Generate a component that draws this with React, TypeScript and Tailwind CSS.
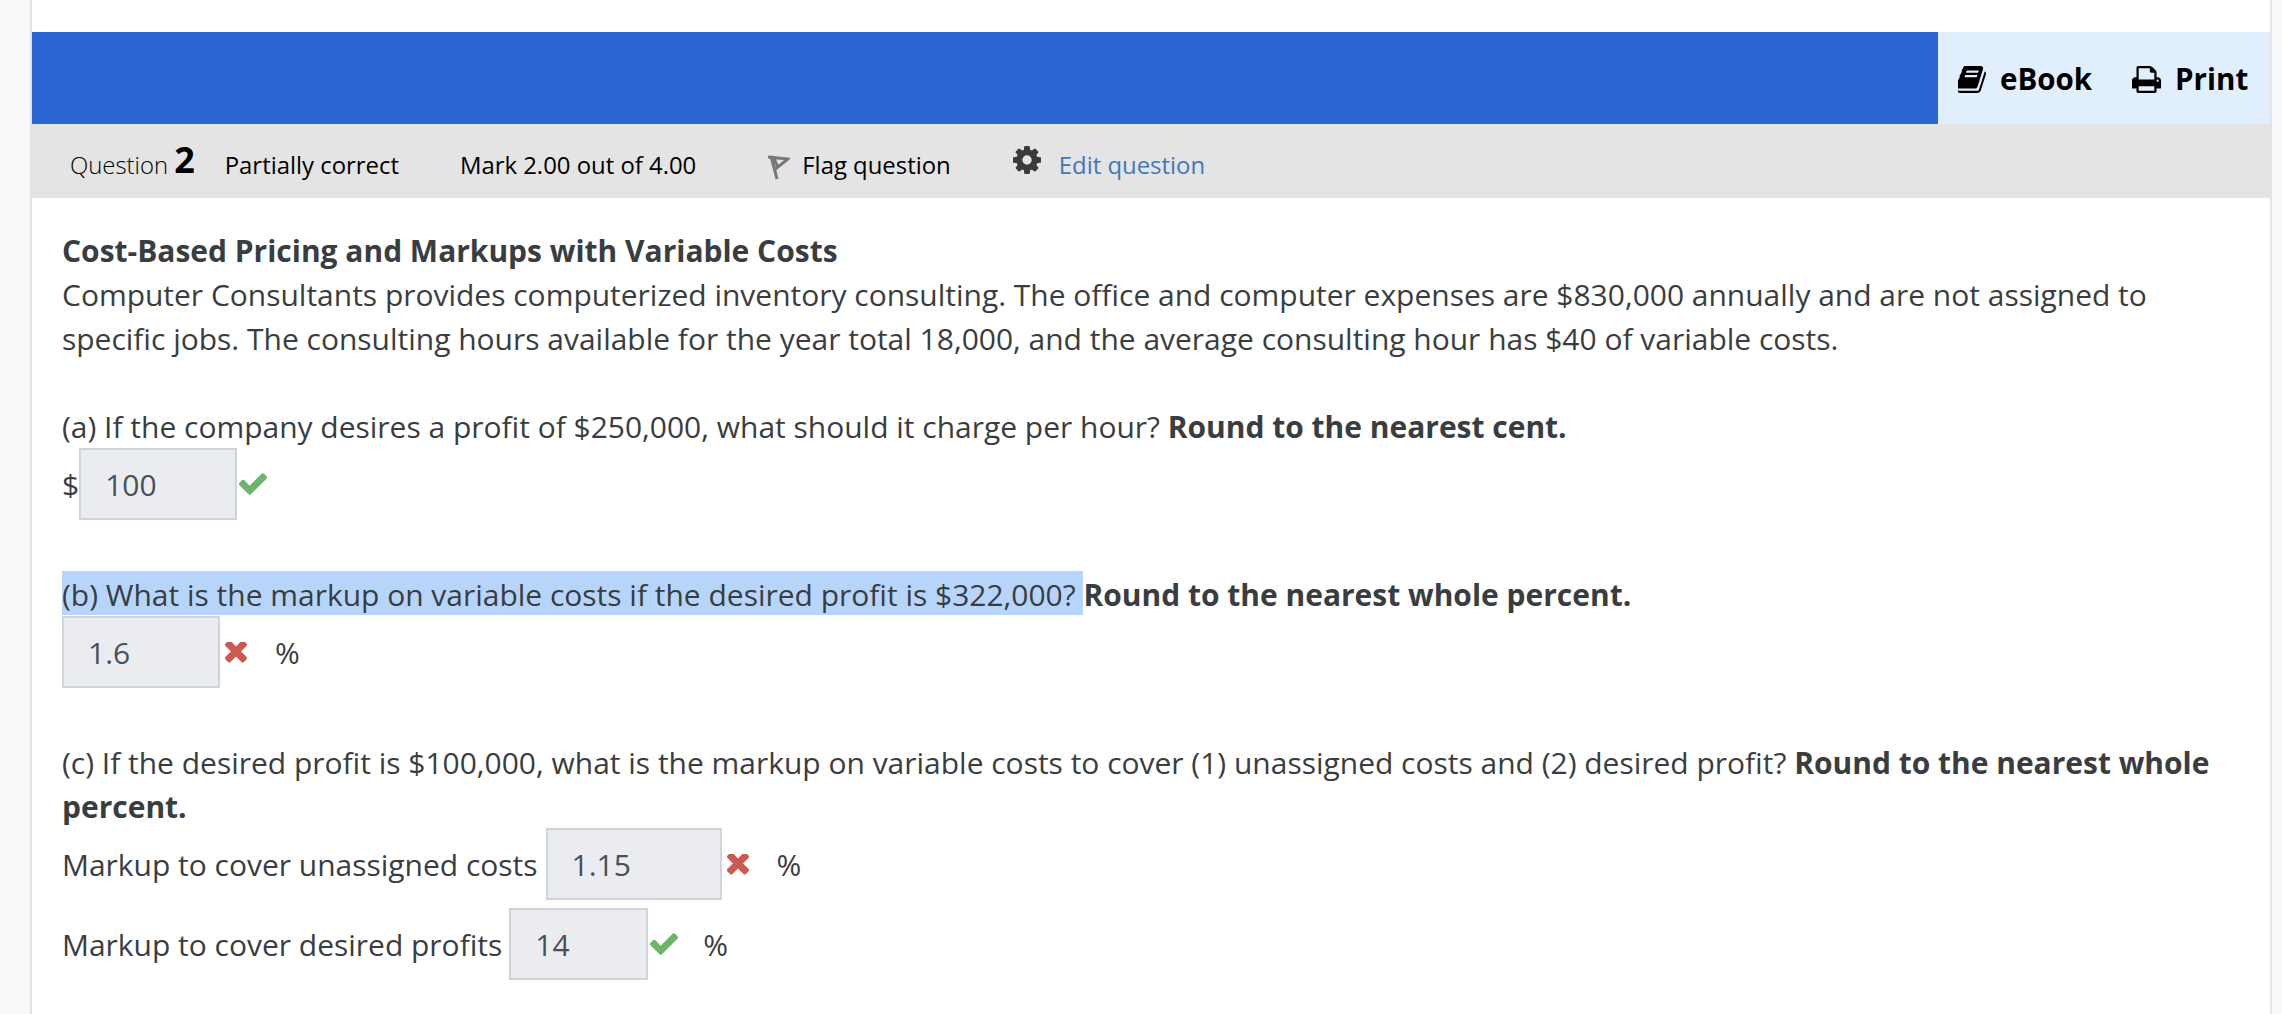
const font = { fontFamily: '"Open Sans", sans-serif' };

function BookIcon() {
    return (
        <svg viewBox="128 128 1536 1536" preserveAspectRatio="none" className="h-[27px] w-[28px]" fill="currentColor">
            <path d="M1639 478q40 57 18 129l-275 906q-19 64-76.5 107.5t-122.5 43.5h-923q-77 0-148.5-53.5t-99.5-131.5q-24-67-2-127 0-4 3-27t4-37q1-8-3-21.5t-3-19.5q2-11 8-21t16.5-23.5 16.5-23.5q23-38 45-91.5t30-91.5q3-10 .5-30t-.5-28q3-11 17-28t17-23q21-36 42-92t25-90q1-9-2.5-32t.5-28q4-13 22-30.5t22-22.5q19-26 42.5-84.5t27.5-96.5q1-8-3-25.5t-2-26.5q2-8 9-18t18-23 17-21q8-12 16.5-30.5t15-35 16-36 19.5-32 26.5-23.5 36-11.5 47.5 5.5l-1 3q38-9 51-9h761q74 0 114 56t18 130l-274 906q-36 119-71.5 153.5t-128.5 34.5h-869q-27 0-38 15-11 16-1 43 24 70 144 70h923q29 0 56-15.5t35-41.5l300-987q7-22 5-57 38 15 59 43zm-1064 2q-4 13 2 22.5t20 9.5h608q13 0 25.5-9.5t16.5-22.5l21-64q4-13-2-22.5t-20-9.5h-608q-13 0-25.5 9.5t-16.5 22.5zm-83 256q-4 13 2 22.5t20 9.5h608q13 0 25.5-9.5t16.5-22.5l21-64q4-13-2-22.5t-20-9.5h-608q-13 0-25.5 9.5t-16.5 22.5z" />
        </svg>
    );
}

function PrintIcon() {
    return (
        <svg viewBox="64 128 1664 1536" className="h-[27px] w-[29px]" fill="currentColor">
            <path d="M448 1536h896v-256h-896v256zm0-640h896v-384h-160q-40 0-68-28t-28-68v-160h-640v640zm1152 64q0-26-19-45t-45-19-45 19-19 45 19 45 45 19 45-19 19-45zm128 0v416q0 13-9.5 22.5t-22.5 9.5h-224v160q0 40-28 68t-68 28h-960q-40 0-68-28t-28-68v-160h-224q-13 0-22.5-9.5t-9.5-22.5v-416q0-79 56.5-135.5t135.5-56.5h64v-544q0-40 28-68t68-28h672q40 0 88 20t76 48l152 152q28 28 48 76t20 88v256h64q79 0 135.5 56.5t56.5 135.5z" />
        </svg>
    );
}

function CogIcon() {
    return (
        <svg viewBox="128 128 1536 1536" className="ml-[62px] mb-[10px] h-[28px] w-[28px] text-[#3a3a3a]" fill="currentColor">
            <path d="M1152 896q0-106-75-181t-181-75-181 75-75 181 75 181 181 75 181-75 75-181zm512-109v222q0 12-8 23t-20 13l-185 28q-19 54-39 91 35 50 107 138 10 12 10 25t-9 23q-27 37-99 108t-94 71q-12 0-26-9l-138-108q-44 23-91 38-16 136-29 186-7 28-36 28h-222q-14 0-24.5-8.5t-11.5-21.5l-28-184q-49-16-90-37l-141 107q-10 9-25 9-14 0-25-11-126-114-165-168-7-10-7-23 0-12 8-23 15-21 51-66.5t54-70.5q-27-50-41-99l-183-27q-13-2-21-12.5t-8-23.5v-222q0-12 8-23t19-13l186-28q14-46 39-92-40-57-107-138-10-12-10-24 0-10 9-23 26-36 98.5-107.5t94.5-71.5q13 0 26 10l138 107q44-23 91-38 16-136 29-186 7-28 36-28h222q14 0 24.5 8.5t11.5 21.5l28 184q49 16 90 37l142-107q9-9 24-9 13 0 25 10 129 119 165 170 7 8 7 22 0 12-8 23-15 21-51 66.5t-54 70.5q26 50 41 98l183 28q13 2 21 12.5t8 23.5z" />
        </svg>
    );
}

function Answer({ value, width }: { value: string; width: string }) {
    return (
        <span className={`inline-flex h-[72px] items-center border-2 border-[#ced4da] bg-[#eaecf0] pl-[24px] pt-[2px] text-[#495057] ${width}`}>
            {value}
        </span>
    );
}

function Good() {
    return (
        <svg viewBox="121 334 1550 1188" className="ml-[2px] h-[22px] w-[28px] text-[#6cb56a]" fill="currentColor">
            <path d="M1671 566q0 40-28 68l-724 724-136 136q-28 28-68 28t-68-28l-136-136-362-362q-28-28-28-68t28-68l136-136q28-28 68-28t68 28l294 295 656-657q28-28 68-28t68 28l136 136q28 28 28 68z" />
        </svg>
    );
}

function Bad() {
    return (
        <svg viewBox="110 374 1188 1072" className="ml-[5px] h-[21px] w-[22px] text-[#cd5a51]" fill="currentColor">
            <path d="M1298 1214q0 40-28 68l-136 136q-28 28-68 28t-68-28l-294-294-294 294q-28 28-68 28t-68-28l-136-136q-28-28-28-68t28-68l294-294-294-294q-28-28-28-68t28-68l136-136q28-28 68-28t68 28l294 294 294-294q28-28 68-28t68 28l136 136q28 28 28 68t-28 68l-294 294 294 294q28 28 28 68z" />
        </svg>
    );
}

export default function App() {
    return (
        <div style={font} className="h-[1014px] overflow-hidden bg-[#f8f9fb]">
            <div className="ml-[30px] mr-[10px] h-[1014px] border-x-2 border-[#e3e4e6] bg-white">
                <div className="pt-[32px]">
                    <div className="flex h-[92px] bg-[#2b66d2]">
                        <div className="flex-1" />
                        <div className="flex w-[332px] items-center gap-[40px] bg-[#e1eefc] pl-[20px] pt-[2px] text-[29.5px] font-bold text-black">
                            <span className="flex items-center gap-[14px]">
                                <BookIcon />
                                eBook
                            </span>
                            <span className="flex items-center gap-[14px]">
                                <PrintIcon />
                                Print
                            </span>
                        </div>
                    </div>
                    <div className="flex h-[74px] items-center bg-[#e4e4e4] pl-[38px] pt-[8px] text-[23.9px] text-black">
                        <span className="font-light">Question</span>
                        <span className="ml-[6px] mb-[10px] text-[36px] leading-none font-bold">2</span>
                        <span className="ml-[30px]">Partially correct</span>
                        <span className="ml-[61px]">Mark 2.00 out of 4.00</span>
                        <svg viewBox="0 0 24 26" className="ml-[70px] mt-[4px] h-[26px] w-[24px] text-[#777] blur-[0.5px]" fill="none" stroke="currentColor" strokeWidth="3">
                            <path d="M5 2 L11 25 M2 3 L22 5 L8 16 M8 4 L12 14" />
                        </svg>
                        <span className="ml-[12px]">Flag question</span>
                        <CogIcon />
                        <span className="ml-[18px] text-[#3f78bb]">Edit question</span>
                    </div>
                </div>
                <div className="pl-[30px] pr-[40px] pt-[31px] text-[29.97px] leading-[44px] text-[#3a3d40]">
                    <p className="font-bold">Cost-Based Pricing and Markups with Variable Costs</p>
                    <p>
                        Computer Consultants provides computerized inventory consulting. The office and computer expenses are $830,000 annually and are not assigned to specific jobs. The consulting hours available for the year total 18,000, and the average consulting hour has $40 of variable costs.
                    </p>
                    <p className="mt-[44px] -mb-[1px]">
                        (a) If the company desires a profit of $250,000, what should it charge per hour? <b>Round to the nearest cent.</b>
                    </p>
                    <div className="flex items-center">
                        <span className="pt-[2px]">$</span>
                        <Answer value="100" width="w-[158px]" />
                        <Good />
                    </div>
                    <p className="mt-[53px] -mb-[1px]">
                        <span className="bg-[#b7d5fb] pt-[3px]">(b) What is the markup on variable costs if the desired profit is $322,000? </span>
                        <b>Round to the nearest whole percent.</b>
                    </p>
                    <div className="flex items-center">
                        <Answer value="1.6" width="w-[158px]" />
                        <Bad />
                        <span className="ml-[28px] pt-[2px]">%</span>
                    </div>
                    <p className="mt-[53px]">
                        (c) If the desired profit is $100,000, what is the markup on variable costs to cover (1) unassigned costs and (2) desired profit? <b>Round to the nearest whole percent.</b>
                    </p>
                    <div className="-mt-[1px] flex items-center">
                        <span className="mr-[8px] pt-[2px]">Markup to cover unassigned costs</span>
                        <Answer value="1.15" width="w-[176px]" />
                        <Bad />
                        <span className="ml-[28px] pt-[2px]">%</span>
                    </div>
                    <div className="mt-[8px] flex items-center">
                        <span className="mr-[7px] pt-[2px]">Markup to cover desired profits</span>
                        <Answer value="14" width="w-[139px]" />
                        <Good />
                        <span className="ml-[25px] pt-[2px]">%</span>
                    </div>
                </div>
            </div>
        </div>
    );
}
